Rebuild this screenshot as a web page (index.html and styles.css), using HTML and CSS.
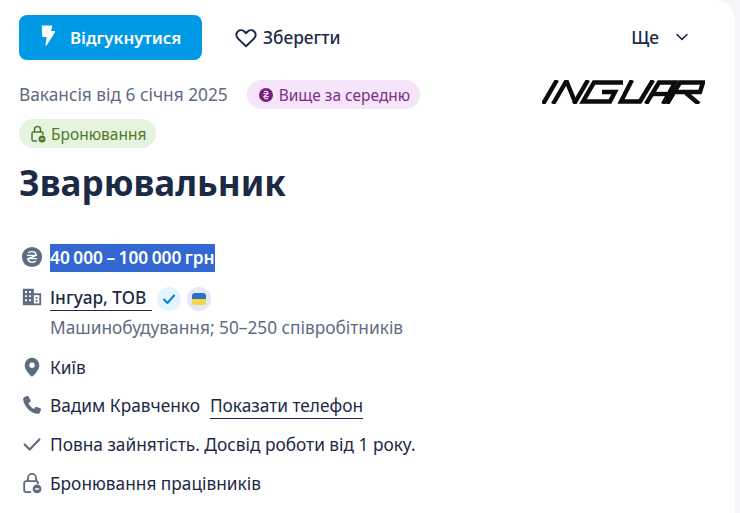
FILE: index.html
```html
<!DOCTYPE html>
<html lang="uk">
<head>
  <meta charset="UTF-8" />
  <meta name="viewport" content="width=device-width, initial-scale=1.0"/>
  <title>Зварювальник</title>
  <link rel="stylesheet" href="styles.css">
</head>
<body>
  <div class="card">
    <div class="actions">
      <a class="btn-apply">
        <svg class="bolt" width="16" height="22" viewBox="0 0 16 22"><path d="M3 0.5h8.5c.6 0 1 .6.8 1.1L11 6h3.2c.8 0 1.2.9.7 1.5L6.6 20.5c-.4.6-1.2.2-1.1-.4L6.6 12H3.5c-.8 0-1.3-.6-1.3-1.3L1.8 1.8C1.8 1 2.300 .5 3 .5z" fill="#fff"/></svg>
        <span>Відгукнутися</span>
      </a>
      <a class="btn-save">
        <svg width="24" height="24" viewBox="0 0 24 24"><path d="M12 20.300 4 12.600C1.800 10.400 1.800 7.200 3.800 5.400c2-1.700 5-1.400 6.800.4L12 7.300l1.400-1.500c1.800-1.800 4.800-2.100 6.800-.4 2 1.800 2 5 -.2 7.200z" fill="none" stroke="#1c2a45" stroke-width="2" stroke-linejoin="round"/></svg>
        <span>Зберегти</span>
      </a>
      <a class="btn-more">
        <span>Ще</span>
        <svg class="chevron" width="14" height="8" viewBox="0 0 14 8"><path d="M2 1.500 7 6.300l5-4.800" fill="none" stroke="#1c2a45" stroke-width="1.600" stroke-linecap="round" stroke-linejoin="round"/></svg>
      </a>
    </div>

    <div class="meta">
      <div class="meta-left">
        <span class="date">Вакансія від 6 січня 2025</span>
        <span class="pill pill-purple">
          <svg width="16" height="16" viewBox="0 0 16 16"><circle cx="8" cy="8" r="7" fill="#7b1f7f"/><path d="M5.300 6.500h5.400M5.300 9.500h5.400M6 5c1.200-1.200 4-.8 4 1.200 0 2-4 1.600-4 3.600 0 2 2.800 2.400 4 1.200" fill="none" stroke="#f5e3f8" stroke-width="1.100"/></svg>
          <span>Вище за середню</span>
        </span>
        <span class="pill pill-green">
          <svg width="16" height="18" viewBox="0 0 16 18"><path d="M4.500 7V4.500a3 3 0 0 1 6 0V7" fill="none" stroke="#4f7a2c" stroke-width="1.500"/><path d="M7 16H3.500A1.500 1.500 0 0 1 2 14.500V8.500A1.500 1.500 0 0 1 3.500 7h8A1.500 1.500 0 0 1 13 8.500V10" fill="none" stroke="#4f7a2c" stroke-width="1.500"/><circle cx="12" cy="14" r="3.500" fill="#4f7a2c"/><path d="M10.500 14h3" stroke="#e6f4df" stroke-width="1.200"/></svg>
          <span>Бронювання</span>
        </span>
      </div>
      <svg class="logo" width="163" height="24" viewBox="0 0 163 24" aria-label="Inguar">
        <g fill="none" stroke="#0b0b0b" stroke-width="4.400">
          <path d="M15 0 1 24"/>
          <path d="M25 0 11 24"/>
          <path d="M24 0 33 22"/>
          <path d="M32 24 46 0"/>
          <path d="M81 2.500H52L41 21.500H68L73 12H60"/>
          <path d="M90 0 79 21.500H98L111 0"/>
          <path d="M104 24 117 2.500H133L121 24"/>
          <path d="M111 14H125"/>
          <path d="M125 24 138 2.500H161L158 12H134"/>
          <path d="M144 13 157 24"/>
        </g>
      </svg>
    </div>

    <h1>Зварювальник</h1>

    <ul class="details">
      <li class="row row-salary">
        <svg class="ico" width="24" height="24" viewBox="0 0 24 24"><circle cx="12" cy="12" r="11" fill="#5f6b82"/><path d="M6.500 10.200h11M6.500 13.800h11M7.800 7.800c1.700-2.600 8.400-2.300 8.400 1.500 0 3.600-8.400 2.300-8.400 5.400 0 3.500 6.700 3.800 8.400 1.500" fill="none" stroke="#fff" stroke-width="1.500"/></svg>
        <span class="salary">40 000 – 100 000 грн</span>
      </li>
      <li class="row row-company">
        <svg class="ico" width="24" height="24" viewBox="0 0 24 24"><path d="M2 3h12v5h8v13H2z" fill="#5f6b82"/><g fill="#fff"><path d="M4.500 5.500h2v2h-2zM9 5.500h2v2H9zM4.500 10h2v2h-2zM9 10h2v2H9zM4.500 14.500h2v2h-2zM9 14.500h2v2H9z"/><path d="M14 10h6v9h-6z"/></g><path d="M16 12h2v2h-2zM16 15.500h2v2h-2z" fill="#5f6b82"/></svg>
        <div>
          <div class="company">
            <a class="link">Інгуар, ТОВ</a>
            <span class="badge badge-check">
              <svg width="14" height="12" viewBox="0 0 14 12"><path d="M2 6.500 5.500 10 12 2.500" fill="none" stroke="#0a7fd6" stroke-width="2" stroke-linecap="round" stroke-linejoin="round"/></svg>
            </span>
            <span class="badge badge-ua"><span class="flag"></span></span>
          </div>
          <div class="muted">Машинобудування; 50–250 співробітників</div>
        </div>
      </li>
      <li class="row row-tight">
        <svg class="ico" width="24" height="24" viewBox="0 0 24 24"><path d="M12 2a8 8 0 0 0-8 8c0 5.400 6.300 11.100 7.300 12a1 1 0 0 0 1.400 0c1-.9 7.300-6.600 7.300-12a8 8 0 0 0-8-8z" fill="#5f6b82"/><circle cx="12" cy="10" r="3" fill="#fff"/></svg>
        <span>Київ</span>
      </li>
      <li class="row row-tight">
        <svg class="ico" width="24" height="24" viewBox="0 0 24 24"><path d="M6.600 2.300 3.800 3.400C2.700 3.900 2.200 5 2.400 6.200c1.300 8 7.400 14 15.400 15.400 1.200.2 2.300-.3 2.800-1.400l1.100-2.800c.3-.7 0-1.500-.7-1.800l-3.600-1.500c-.6-.3-1.300-.1-1.700.4l-1.500 1.900c-2.700-1.300-4.900-3.500-6.200-6.200l1.900-1.500c.5-.4.700-1.100.4-1.700L8.400 3c-.3-.7-1.100-1-1.800-.7z" fill="#5f6b82"/></svg>
        <span>Вадим Кравченко</span>
        <a class="link phone">Показати телефон</a>
      </li>
      <li class="row">
        <svg class="ico" width="24" height="24" viewBox="0 0 24 24"><path d="M4 12.500 9.500 18 20 7" fill="none" stroke="#5f6b82" stroke-width="2.400" stroke-linecap="round" stroke-linejoin="round"/></svg>
        <span>Повна зайнятість. Досвід роботи від 1 року.</span>
      </li>
      <li class="row">
        <svg class="ico" width="24" height="24" viewBox="0 0 24 24"><path d="M7.500 10V6.500a4.500 4.500 0 0 1 9 0V10" fill="none" stroke="#5f6b82" stroke-width="2"/><path d="M11 22H5.500A2 2 0 0 1 3.500 20V12a2 2 0 0 1 2-2h11a2 2 0 0 1 2 2v1" fill="none" stroke="#5f6b82" stroke-width="2"/><circle cx="17.500" cy="18.500" r="4.800" fill="#5f6b82"/><path d="M15.300 18.500h4.400" stroke="#fff" stroke-width="1.600"/></svg>
        <span>Бронювання працівників</span>
      </li>
    </ul>
  </div>
</body>
</html>
```

FILE: styles.css
```css
body {
  margin: 0;
  background: #f4f5f8;
  color: #1c2a45;
  font-family: "Noto Sans", sans-serif;
  font-size: 17.3px;
  overflow: hidden;
}
.card {
  width: 735px;
  height: 513px;
  box-sizing: border-box;
  background: #fff;
  border-top-right-radius: 20px;
  padding: 15px 30px 0 19px;
}
.actions {
  display: flex;
  align-items: center;
  height: 45px;
}
.btn-apply {
  display: flex;
  align-items: center;
  gap: 14px;
  width: 183px;
  height: 45px;
  box-sizing: border-box;
  padding-left: 21px;
  background: #0099e6;
  color: #fff;
  font-size: 16.9px;
  font-weight: 600;
  border-radius: 8px;
}
.bolt {
  margin-top: -4px;
}
.btn-save {
  display: flex;
  align-items: center;
  gap: 5px;
  margin-left: 32px;
  font-weight: 500;
}
.btn-more {
  display: flex;
  align-items: center;
  gap: 16px;
  margin-left: auto;
  margin-right: 16px;
  font-weight: 500;
}
.chevron {
  margin-top: -2px;
}
.meta {
  display: flex;
  justify-content: space-between;
  align-items: flex-start;
  margin-top: 20px;
}
.meta-left {
  display: flex;
  flex-wrap: wrap;
  align-items: center;
  gap: 10px 19px;
  width: 420px;
}
.date {
  color: #5f6b82;
}
.pill {
  display: inline-flex;
  align-items: center;
  gap: 5px;
  height: 29px;
  padding: 0 10px 0 11px;
  border-radius: 15px;
  font-size: 15.5px;
}
.pill-purple {
  background: #f6e4fa;
  color: #7b2f85;
}
.pill-green {
  background: #e6f4df;
  color: #4f7a2c;
}
.logo {
  display: block;
}
h1 {
  margin: 13px 0 0;
  font-size: 35px;
  line-height: 44px;
  font-weight: 700;
}
.details {
  list-style: none;
  margin: 41px 0 0;
  padding: 0;
}
.row {
  display: flex;
  align-items: flex-start;
  gap: 7px;
  line-height: 24px;
  margin-bottom: 15px;
}
.row-salary {
  margin-bottom: 14px;
}
.row-company {
  margin-bottom: 16px;
}
.row-tight {
  margin-bottom: 14px;
}
.ico {
  flex: none;
  margin-left: 2px;
  width: 22px;
  height: 22px;
}
.salary {
  background: #3367d1;
  color: #fff;
  font-weight: 600;
  line-height: 28px;
  word-spacing: -1px;
  margin-top: -2px;
}
.company {
  display: flex;
  align-items: center;
  gap: 5px;
}
.link {
  border-bottom: 1px solid #1c2a45;
}
.company .link {
  padding-right: 6px;
  font-weight: 500;
}
.phone {
  margin-left: 3px;
}
.badge {
  display: flex;
  align-items: center;
  justify-content: center;
  width: 24px;
  height: 24px;
  border-radius: 50%;
}
.badge-check {
  background: #e3f4fe;
}
.badge-ua {
  margin-left: 1px;
  background: #e3e8f6;
}
.flag {
  width: 14px;
  height: 12px;
  border-radius: 3px;
  background: linear-gradient(#2f6fc4 50%, #f7d73e 50%);
}
.muted {
  margin-top: 5px;
  color: #5f6b82;
}
```
